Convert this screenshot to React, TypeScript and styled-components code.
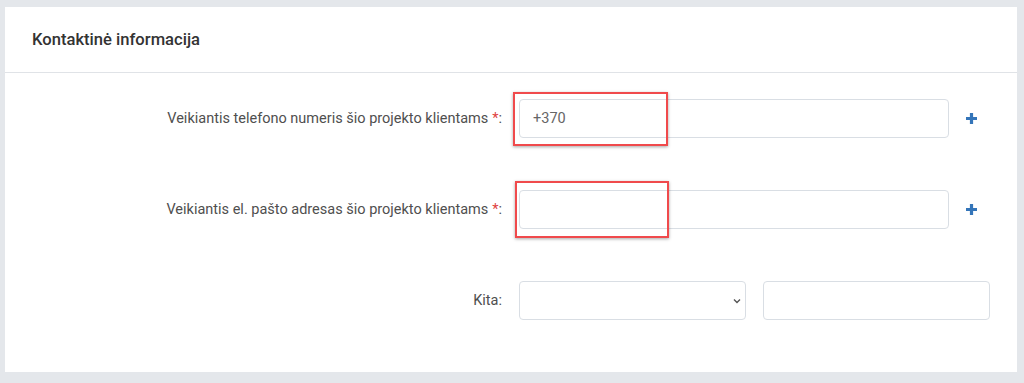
import React from "react";
import styled, { createGlobalStyle } from "styled-components";

const GlobalStyle = createGlobalStyle`
  html, body {
    margin: 0;
    padding: 0;
    background: #e4e7eb;
    font-family: Roboto, "Liberation Sans", Arial, sans-serif;
  }
`;

const Card = styled.section`
  margin: 7px 7px 10px 5px;
  background: #ffffff;
`;

const Header = styled.header`
  height: 65px;
  display: flex;
  align-items: center;
  padding: 0 27px;
  border-bottom: 1px solid #e0e3e7;
`;

const Title = styled.h2`
  margin: 0;
  font-size: 16.6px;
  font-weight: 500;
  color: #333;
`;

const Body = styled.div`
  display: grid;
  grid-template-columns: 497px 1fr;
  column-gap: 17px;
  row-gap: 52px;
  padding: 26px 0 52px;
`;

const Label = styled.label`
  display: flex;
  align-items: center;
  justify-content: flex-end;
  font-size: 14.5px;
  color: #4f4f4f;
  height: 39px;
`;

const Star = styled.span`
  color: #e0403d;
  margin-left: 4px;
`;

const Fields = styled.div`
  display: flex;
  align-items: center;
  gap: 17px;
`;

const Field = styled.div<{ $w: number }>`
  position: relative;
  width: ${(p) => p.$w}px;
  height: 39px;
  box-sizing: border-box;
  border: 1px solid #d9dee4;
  border-radius: 4px;
  background: #fff;
  display: flex;
  align-items: center;
  padding: 0 13px;
  font-size: 14.5px;
  color: #666;
`;

const Chevron = styled.svg`
  position: absolute;
  right: 3px;
  top: 50%;
  transform: translateY(-50%);
`;

const Mark = styled.div<{ $l: number; $t: number; $w: number; $h: number }>`
  position: absolute;
  left: ${(p) => p.$l}px;
  top: ${(p) => p.$t}px;
  width: ${(p) => p.$w}px;
  height: ${(p) => p.$h}px;
  box-sizing: border-box;
  border: 2px solid #f04a4c;
  box-shadow: 0 1px 3px rgba(0, 0, 0, 0.35);
  pointer-events: none;
`;

const AddButton = styled.button`
  border: 0;
  background: none;
  padding: 0;
  margin-left: -1px;
  display: flex;
  cursor: pointer;
`;

const Plus = () => (
  <AddButton aria-label="add">
    <svg width="13" height="13" viewBox="0 0 13 13">
      <path d="M6.5 1v11M1 6.5h11" stroke="#3475b9" strokeWidth="3.2" />
    </svg>
  </AddButton>
);

export default function App() {
  return (
    <>
      <GlobalStyle />
      <Card>
        <Header>
          <Title>Kontaktinė informacija</Title>
        </Header>
        <Body>
          <Label>
            Veikiantis telefono numeris šio projekto klientams<Star>*</Star>:
          </Label>
          <Fields>
            <Field $w={430}>
              +370
              <Mark $l={-7} $t={-8} $w={155} $h={54} />
            </Field>
            <Plus />
          </Fields>

          <Label>
            Veikiantis el. pašto adresas šio projekto klientams<Star>*</Star>:
          </Label>
          <Fields>
            <Field $w={430}>
              <Mark $l={-5} $t={-10} $w={154} $h={57} />
            </Field>
            <Plus />
          </Fields>

          <Label>Kita:</Label>
          <Fields>
            <Field $w={227}>
              <Chevron width="10" height="10" viewBox="0 0 10 10">
                <path d="M2 3.5l3 3 3-3" fill="none" stroke="#555" strokeWidth="1.4" />
              </Chevron>
            </Field>
            <Field $w={227} />
          </Fields>
        </Body>
      </Card>
    </>
  );
}
